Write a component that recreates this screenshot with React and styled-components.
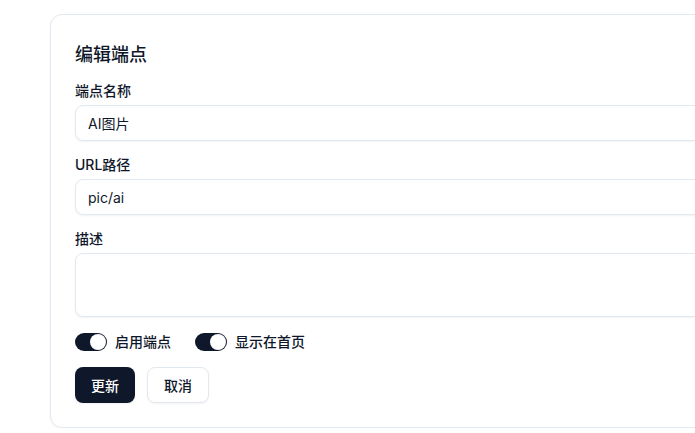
import React, { useState } from "react";
import styled, { createGlobalStyle } from "styled-components";

const Global = createGlobalStyle`
  html, body { margin: 0; padding: 0; background: #ffffff; overflow: hidden; }
  body {
    font-family: "Inter", "Noto Sans CJK SC", sans-serif;
    color: #0f172a;
    -webkit-font-smoothing: antialiased;
  }
  * { box-sizing: border-box; }
`;

const Page = styled.div`
  padding: 14px 0 0 50px;
  width: 800px;
`;

const Card = styled.div`
  width: 720px;
  background: #ffffff;
  border: 1px solid #e2e8f0;
  border-radius: 12px;
  box-shadow: 0 1px 2px rgba(15, 23, 42, 0.04);
  padding: 24px;
`;

const Form = styled.form`
  display: flex;
  flex-direction: column;
  gap: 14px;
`;

const Title = styled.h2`
  margin: 2px 0 -2px;
  font-size: 18px;
  line-height: 28px;
  font-weight: 500;
  color: #0f172a;
`;

const Field = styled.div`
  display: flex;
  flex-direction: column;
  gap: 4px;
`;

const Label = styled.label`
  font-size: 14px;
  line-height: 20px;
  font-weight: 500;
  color: #0f172a;
`;

const Input = styled.input`
  height: 36px;
  width: 100%;
  border: 1px solid #e2e8f0;
  border-radius: 8px;
  padding: 0 12px;
  font: inherit;
  font-size: 14px;
  color: #0f172a;
  background: #fff;
  box-shadow: 0 1px 2px rgba(15, 23, 42, 0.05);
  outline: none;
`;

const TextArea = styled.textarea`
  height: 64px;
  width: 100%;
  border: 1px solid #e2e8f0;
  border-radius: 8px;
  padding: 8px 12px;
  font: inherit;
  font-size: 14px;
  resize: none;
  background: #fff;
  box-shadow: 0 1px 2px rgba(15, 23, 42, 0.05);
  outline: none;
`;

const ToggleRow = styled.div`
  display: flex;
  align-items: center;
  gap: 24px;
  height: 22px;
`;

const ToggleItem = styled.label`
  display: flex;
  align-items: center;
  gap: 8px;
  font-size: 14px;
  line-height: 20px;
  font-weight: 500;
  color: #0f172a;
  cursor: pointer;
`;

const Track = styled.button`
  width: 32px;
  height: 18px;
  border-radius: 999px;
  border: 1px solid transparent;
  padding: 0;
  background: ${(p) => (p.$on ? "#0f172a" : "#e2e8f0")};
  display: flex;
  align-items: center;
  justify-content: ${(p) => (p.$on ? "flex-end" : "flex-start")};
  cursor: pointer;
`;

const Thumb = styled.span`
  width: 16px;
  height: 16px;
  border-radius: 50%;
  background: #ffffff;
  display: block;
`;

const Buttons = styled.div`
  display: flex;
  gap: 12px;
`;

const Button = styled.button`
  height: 36px;
  padding: 0 16px;
  border-radius: 8px;
  font: inherit;
  font-size: 14px;
  font-weight: 500;
  cursor: pointer;
  border: ${(p) => (p.$primary ? "none" : "1px solid #e2e8f0")};
  background: ${(p) => (p.$primary ? "#0f172a" : "#ffffff")};
  color: ${(p) => (p.$primary ? "#ffffff" : "#0f172a")};
  box-shadow: 0 1px 2px rgba(15, 23, 42, 0.05);
`;

function Toggle({ label }) {
  const [on, setOn] = useState(true);
  return (
    <ToggleItem>
      <Track type="button" $on={on} onClick={() => setOn(!on)}>
        <Thumb />
      </Track>
      {label}
    </ToggleItem>
  );
}

export default function App() {
  return (
    <>
      <Global />
      <Page>
        <Card>
          <Form onSubmit={(e) => e.preventDefault()}>
            <Title>编辑端点</Title>
            <Field>
              <Label>端点名称</Label>
              <Input defaultValue="AI图片" />
            </Field>
            <Field>
              <Label>URL路径</Label>
              <Input defaultValue="pic/ai" />
            </Field>
            <Field>
              <Label>描述</Label>
              <TextArea />
            </Field>
            <ToggleRow>
              <Toggle label="启用端点" />
              <Toggle label="显示在首页" />
            </ToggleRow>
            <Buttons>
              <Button $primary type="submit">更新</Button>
              <Button type="button">取消</Button>
            </Buttons>
          </Form>
        </Card>
      </Page>
    </>
  );
}
